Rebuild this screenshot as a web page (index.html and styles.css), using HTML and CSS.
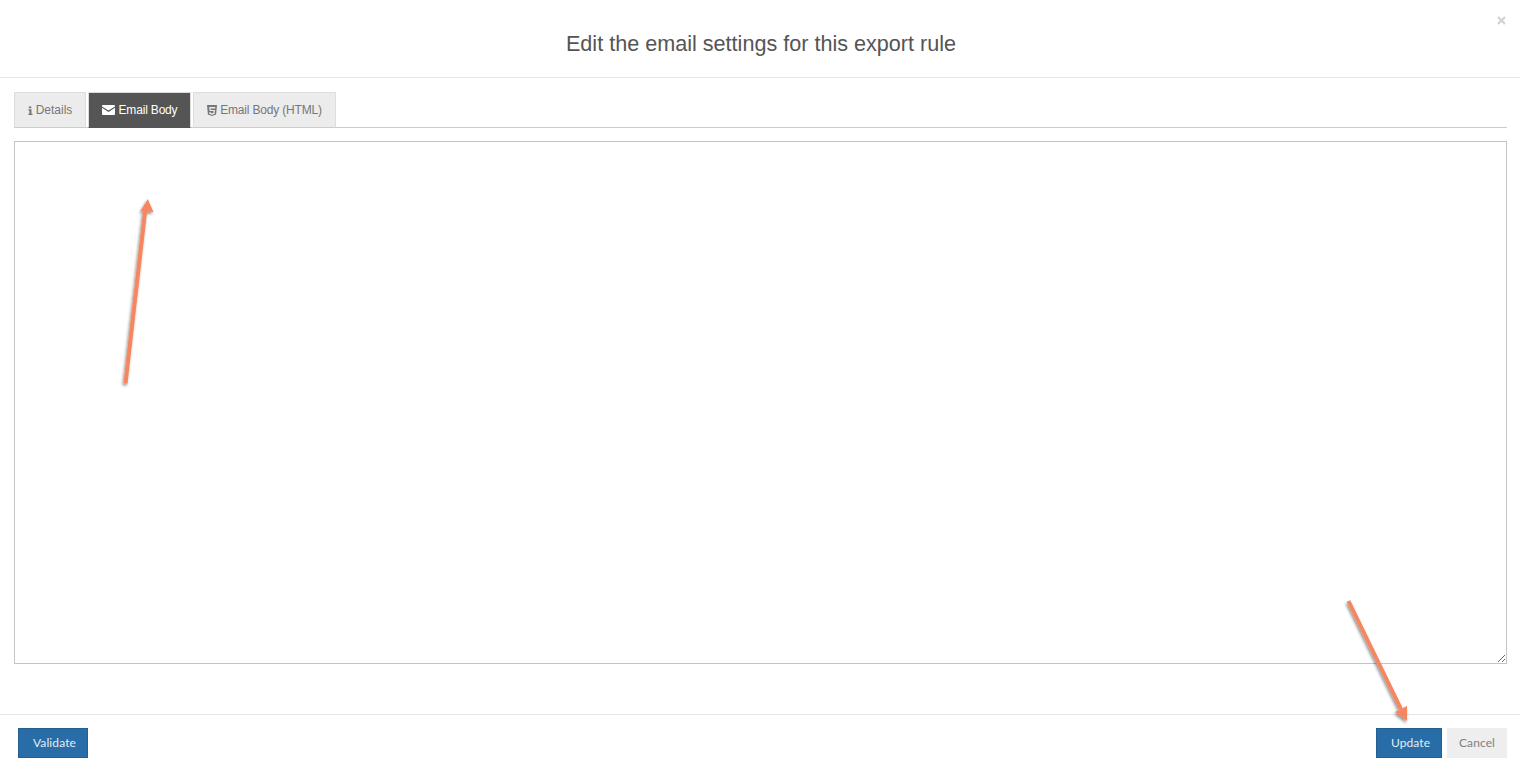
FILE: index.html
```html
<!DOCTYPE html>
<html lang="en">
<head>
<meta charset="utf-8">
<title>Edit the email settings for this export rule</title>
<link rel="stylesheet" href="styles.css">
</head>
<body>
<div class="modal">
  <header class="modal-header">
    <h1 class="modal-title">Edit the email settings for this export rule</h1>
    <svg class="close" viewBox="0 0 9 9"><path d="M1 1l7 7M8 1L1 8"/></svg>
  </header>
  <main class="modal-body">
    <nav class="tabs">
      <a class="tab">
        <svg class="icon icon-info" viewBox="0 0 6 11"><path d="M1 0.5h3v2.2H1zM0.4 4h3.8v5.4h1.2V11H0.4V9.4h1.2V5.6H0.4z"/></svg>
        <span>Details</span>
      </a>
      <a class="tab active">
        <svg class="icon icon-mail" viewBox="0 0 13 10"><path d="M1 0h11a1 1 0 0 1 1 1v.4L6.500 5.600 0 1.400V1a1 1 0 0 1 1-1z"/><path d="M0 2.800l6.500 4.100L13 2.800V9a1 1 0 0 1-1 1H1a1 1 0 0 1-1-1z"/></svg>
        <span>Email Body</span>
      </a>
      <a class="tab">
        <svg class="icon icon-html" viewBox="0 0 10 11"><path fill-rule="evenodd" d="M0 0h10L9.100 9.600 5 11 .9 9.600zM2.200 2l.4 4h4l-.15 1.800L5 8.300l-1.450-.5-.1-.9H2.300l.2 2L5 9.700l2.500-.8.5-4H3.700l-.1-1.300h4.600L8.300 2z"/></svg>
        <span>Email Body (HTML)</span>
      </a>
    </nav>
    <textarea class="editor"></textarea>
  </main>
  <footer class="modal-footer">
    <button class="btn btn-primary btn-validate">Validate</button>
    <div class="footer-right">
      <button class="btn btn-primary btn-update">Update</button>
      <button class="btn btn-default btn-cancel">Cancel</button>
    </div>
  </footer>
</div>
<svg class="arrows" viewBox="0 0 1520 770" width="1520" height="770">
  <defs>
    <filter id="shadow" x="-50%" y="-10%" width="200%" height="120%">
      <feDropShadow dx="-1" dy="2" stdDeviation="1.800" flood-color="#000" flood-opacity="0.45"/>
    </filter>
  </defs>
  <g filter="url(#shadow)">
    <path class="arrow-line" d="M125.500 383.500L145.500 208"/>
    <path class="arrow-head" d="M147.800 199L153.500 212L140.500 211z"/>
    <path class="arrow-line" d="M1348.500 601L1401 709"/>
    <path class="arrow-head" d="M1407 721L1395 712L1407 706z"/>
  </g>
</svg>
</body>
</html>
```
FILE: styles.css
```css
* { box-sizing: border-box; }
html, body { margin: 0; padding: 0; height: 770px; overflow: hidden; background: #fff; }
body { font-family: "Liberation Sans", Arial, sans-serif; color: #555; }
.modal { display: flex; flex-direction: column; width: 1520px; height: 770px; }
.modal-header {
  position: relative;
  height: 78px;
  flex: none;
  border-bottom: 1px solid #e5e5e5;
  display: flex;
  justify-content: center;
  padding: 30px 0 0 2px;
}
.modal-title { margin: 0; font-size: 21.6px; line-height: 27px; font-weight: 400; color: #555; }
.close {
  position: absolute;
  top: 16px;
  right: 14px;
  width: 9px;
  height: 9px;
  fill: none;
  stroke: #d5cdd6;
  stroke-width: 2;
}
.modal-body { flex: 1; padding: 14px 13px 0 14px; display: flex; flex-direction: column; }
.tabs { display: flex; gap: 2px; height: 36px; border-bottom: 1px solid #ccc; flex: none; }
.tab {
  height: 36px;
  display: flex;
  align-items: center;
  justify-content: center;
  gap: 3px;
  font-size: 12px;
  color: #777;
  background: #ececec;
  border: 1px solid #ddd;
  border-bottom-color: #ccc;
}
.tab:nth-child(1) { width: 72px; }
.tab:nth-child(2) { width: 103px; gap: 4px; letter-spacing: -0.18px; }
.tab:nth-child(3) { width: 143px; letter-spacing: -0.18px; }
.tab.active { background: #555; color: #fff; border-color: #ddd; border-bottom-color: #555; }
.icon { fill: currentColor; display: block; flex: none; }
.icon-info { width: 5px; height: 9px; }
.icon-mail { width: 13px; height: 10px; }
.icon-html { width: 10px; height: 11px; }
.editor {
  display: block;
  width: 1493px;
  height: 523px;
  margin-top: 13px;
  border: 1px solid #c4c4c4;
  background: #fff;
  padding: 6px 12px;
  outline: none;
  flex: none;
}
.modal-footer {
  flex: none;
  height: 56px;
  border-top: 1px solid #e5e5e5;
  padding: 13px 13px 12px 18px;
  display: flex;
  justify-content: space-between;
}
.footer-right { display: flex; gap: 5px; }
.btn {
  height: 30px;
  padding: 0 0 2px;
  font-family: Lato, "Liberation Sans", sans-serif;
  font-size: 12px;
  letter-spacing: 0.1px;
  border: 1px solid transparent;
  border-radius: 0;
}
.btn-primary { background: #286ca8; border-color: #23608f; color: #e4edf5; padding-left: 3px; }
.btn-default { background: #eee; border-color: #eee; color: #808080; }
.btn-validate { width: 70px; }
.btn-update { width: 66px; }
.btn-cancel { width: 60px; }
.arrows { position: absolute; left: 0; top: 0; pointer-events: none; }
.arrow-line { fill: none; stroke: #f58660; stroke-width: 4; }
.arrow-head { fill: #f58660; }
```
